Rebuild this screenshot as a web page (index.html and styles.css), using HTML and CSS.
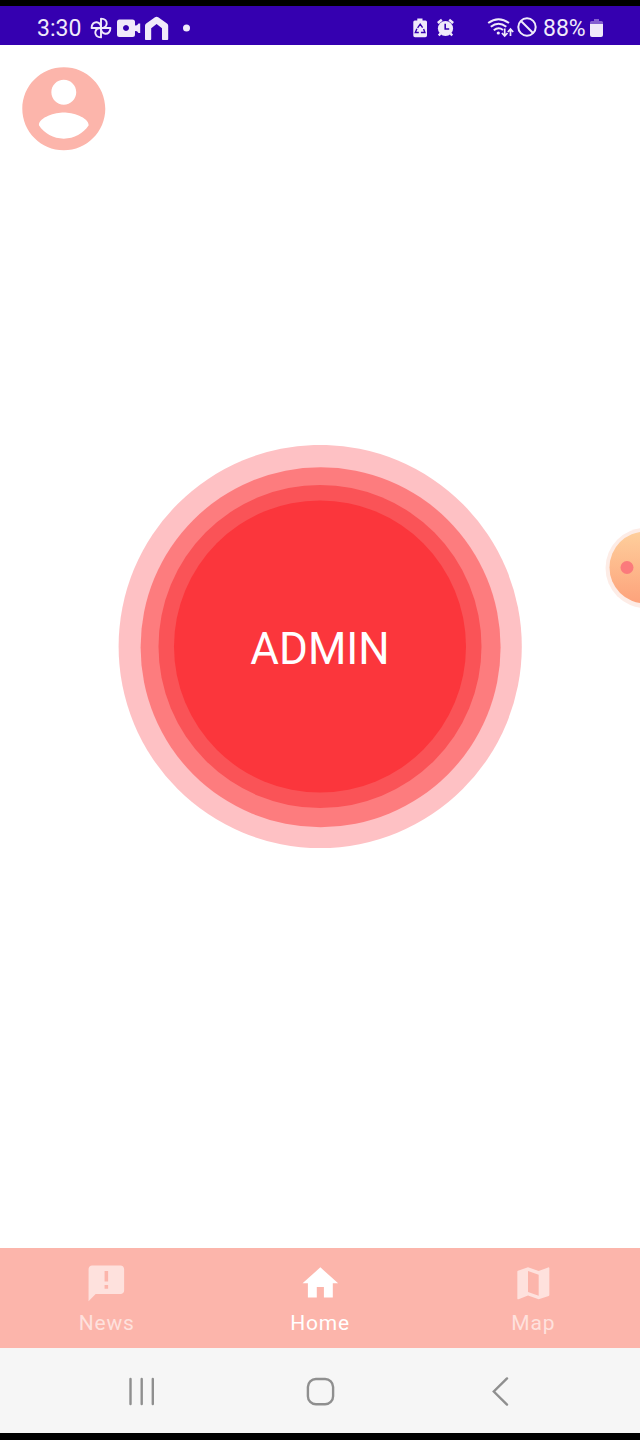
FILE: index.html
```html
<!DOCTYPE html>
<html lang="en">
<head>
<meta charset="utf-8">
<title>Admin</title>
<link rel="stylesheet" href="styles.css">
</head>
<body>
<div class="screen">
  <header class="status">
    <span class="status-text time">3:30</span>
    <svg class="status-left" viewBox="88 6 110 39" width="110" height="39">
      <g fill="none" stroke="#f0eafa" stroke-width="1.900" stroke-linejoin="round">
        <path d="M101 28V18.600C105 18.600 107 21 106.700 23.800C106.300 26.600 104 28 101 28"/>
        <path d="M101 28V18.600C105 18.600 107 21 106.700 23.800C106.300 26.600 104 28 101 28" transform="rotate(90 101 28)"/>
        <path d="M101 28V18.600C105 18.600 107 21 106.700 23.800C106.300 26.600 104 28 101 28" transform="rotate(180 101 28)"/>
        <path d="M101 28V18.600C105 18.600 107 21 106.700 23.800C106.300 26.600 104 28 101 28" transform="rotate(270 101 28)"/>
      </g>
      <g fill="#f0eafa">
        <path fill-rule="evenodd" d="M119.500 19.500h13q2.500 0 2.500 2.500v3.500l2-.2 1.500-1.800h1.700v9.500h-1.700l-1.500-1.800-2-.2v3.500q0 2.500-2.500 2.500h-13q-2.500 0-2.500-2.500V22q0-2.500 2.500-2.500zM126 25a3 3 0 1 0 .01 0z"/>
        <path d="M145 39.200V25.800q0-1.500 1.200-2.400l8.800-6.200q1.600-1.100 3.200 0l8.800 6.200q1.200.9 1.200 2.400v13.400q0 .8-.8.800h-4.600q-.8 0-.8-.8V28.300l-5.400-4.300-5.400 4.300v10.900q0 .8-.8.800h-4.600q-.8 0-.8-.8z"/>
        <circle cx="186.500" cy="28" r="3.500"/>
      </g>
    </svg>
    <svg class="status-right" viewBox="408 6 132 39" width="132" height="39">
      <path fill="#f0eafa" d="M417.300 18.500h5.200v2h3q1.500 0 1.500 1.500v13.500q0 1.700-1.700 1.700h-10.300q-1.700 0-1.700-1.700V22q0-1.500 1.500-1.500h2.500z"/>
      <path d="M417.600 27.800l2.600-3.600 2.400 3.400M423.600 29l1.300 3.500h-4M418.800 32.500h-3.500l1.600-3.700" fill="none" stroke="#3500b0" stroke-width="1.400"/>
      <circle cx="445.500" cy="28.500" r="7.600" fill="#f0eafa"/>
      <path d="M437.800 23l4-3.300M453.200 23l-4-3.300M440.500 33.500l-1.700 2M450.500 33.500l1.700 2" fill="none" stroke="#f0eafa" stroke-width="2.400"/>
      <path d="M445.200 23.700v5.300h4" fill="none" stroke="#3500b0" stroke-width="1.600"/>
      <g fill="none" stroke="#f0eafa" stroke-width="2">
        <path d="M488.200 23q10.300-7.700 20.800 0M490.800 26.800q7.700-6 15.500 0M493.800 30.300q4.700-3.800 9.200-.3"/>
        <path d="M504.700 28.500v7M501.900 33l2.800 3 2.800-3M510.500 36v-6.500M507.800 32l2.700-3 2.700 3" stroke-width="1.700"/>
        <circle cx="527" cy="27" r="8.700"/>
        <path d="M521 21l12 12"/>
      </g>
      <circle cx="498.300" cy="33" r="1.600" fill="#f0eafa"/>
    </svg>
    <span class="status-text percent">88%</span>
    <svg class="battery" viewBox="590 6 14 39" width="14" height="39">
      <path d="M594 19h5v2h2.500q1.500 0 1.500 1.500V25h-13v-2.500q0-1.500 1.500-1.500h2.500z" fill="#8460d0"/>
      <path d="M590 24h13v11q0 2-2 2h-9q-2 0-2-2z" fill="#f0eafa"/>
    </svg>
  </header>

  <main class="content">
    <svg class="avatar" viewBox="0 0 24 24" fill="#fcb5ab">
      <path d="M12 2C6.480 2 2 6.480 2 12s4.480 10 10 10 10-4.480 10-10S17.520 2 12 2zm0 3c1.660 0 3 1.340 3 3s-1.340 3-3 3-3-1.340-3-3 1.340-3 3-3zm0 14.200c-2.500 0-4.710-1.280-6-3.220.03-1.990 4-3.080 6-3.080 1.990 0 5.970 1.090 6 3.080-1.290 1.940-3.500 3.220-6 3.220z"/>
    </svg>
    <div class="alert-button">
      <svg class="rings" viewBox="118 445 404 404" width="404" height="404">
        <circle cx="320.200" cy="646.500" r="201.600" fill="#fec1c4"/>
        <circle cx="320.600" cy="647.200" r="180" fill="#fd7c7e"/>
        <circle cx="320" cy="646.500" r="161.500" fill="#fa5357"/>
        <circle cx="320" cy="646.500" r="146" fill="#fb363c"/>
      </svg>
      <span class="alert-label">ADMIN</span>
    </div>
    <svg class="bubble" viewBox="600 520 40 96" width="40" height="96">
      <defs><linearGradient id="peach" x1="0" y1="0" x2="0" y2="1"><stop offset="0" stop-color="#fecf9c"/><stop offset="1" stop-color="#fda27b"/></linearGradient></defs>
      <circle cx="645.500" cy="568" r="40" fill="#fdece6"/>
      <circle cx="645.500" cy="567.500" r="36" fill="url(#peach)"/>
      <circle cx="627" cy="567.500" r="6.500" fill="#fb7a7c"/>
    </svg>
  </main>

  <nav class="tabs">
    <div class="tab">
      <svg class="tab-icon" viewBox="0 0 24 24"><path d="M20 2H4c-1.100 0-1.990.9-1.990 2L2 22l4-4h14c1.100 0 2-.9 2-2V4c0-1.100-.9-2-2-2zm-7 9h-2V5h2v6zm0 4h-2v-2h2v2z"/></svg>
      <span>News</span>
    </div>
    <div class="tab active">
      <svg class="tab-icon" viewBox="0 0 24 24"><path d="M10 20v-6h4v6h5v-8h3L12 3 2 12h3v8z"/></svg>
      <span>Home</span>
    </div>
    <div class="tab">
      <svg class="tab-icon" viewBox="0 0 24 24"><path d="M20.500 3l-.16.03L15 5.100 9 3 3.360 4.900c-.21.07-.36.25-.36.48V20.500c0 .28.22.5.5.5l.16-.03L9 18.900l6 2.100 5.640-1.900c.21-.07.36-.25.36-.48V3.500c0-.28-.22-.5-.5-.5zM15 19l-6-2.110V5l6 2.110V19z"/></svg>
      <span>Map</span>
    </div>
  </nav>

  <footer class="system-nav">
    <svg viewBox="128 1376 28 30" width="28" height="30"><path d="M130.500 1379v25M141.700 1379v25M152.800 1379v25"/></svg>
    <svg viewBox="305 1376 30 30" width="30" height="30"><rect x="307.900" y="1379" width="25.200" height="25.200" rx="8"/></svg>
    <svg viewBox="490 1376 20 30" width="20" height="30"><path d="M507 1378.400L493.800 1391.500l13.200 13.100"/></svg>
  </footer>
</div>
</body>
</html>
```

FILE: styles.css
```css
* {
  box-sizing: border-box;
}

body {
  margin: 0;
  background: #000;
  font-family: Roboto, "Liberation Sans", sans-serif;
}

svg {
  display: block;
  flex: none;
}

.screen {
  display: flex;
  flex-direction: column;
  width: 640px;
  height: 1440px;
  padding: 6px 0 7px;
  overflow: hidden;
}

.status {
  display: flex;
  flex: none;
  height: 39px;
  padding-left: 37px;
  background: #3500b0;
}

.status-text {
  flex: none;
  color: #f0eafa;
  font-size: 23px;
  line-height: 46px;
  white-space: nowrap;
}

.time {
  width: 51px;
}

.status-right {
  margin-left: 210px;
}

.percent {
  width: 47px;
  margin-left: 3px;
}

.content {
  position: relative;
  display: flex;
  flex: 1;
  flex-direction: column;
  align-items: center;
  background: #fff;
}

.avatar {
  align-self: flex-start;
  width: 99.600px;
  height: 99.600px;
  margin: 14.400px 0 0 14.400px;
}

.alert-button {
  display: grid;
  place-items: center;
  width: 404px;
  height: 404px;
  margin-top: 286px;
}

.rings,
.alert-label {
  grid-area: 1 / 1;
}

.alert-label {
  padding-top: 5px;
  color: #fff;
  font-size: 44px;
  line-height: 52px;
}

.bubble {
  position: absolute;
  top: 475px;
  right: 0;
}

.tabs {
  display: grid;
  flex: none;
  grid-template-columns: repeat(3, 1fr);
  height: 100px;
  background: #fcb5ab;
}

.tab {
  display: flex;
  flex-direction: column;
  align-items: center;
  padding-top: 14px;
  color: #fee1dd;
  font-size: 21px;
  line-height: 26px;
  letter-spacing: 0.8px;
}

.tab span {
  margin-top: 5px;
}

.tab-icon {
  width: 42.700px;
  height: 42.700px;
  fill: currentColor;
}

.active {
  color: #fff;
}

.system-nav {
  display: grid;
  flex: none;
  grid-template-columns: 177px 185px 20px;
  height: 85px;
  padding: 28px 0 0 128px;
  background: #f6f6f6;
  fill: none;
  stroke: #8f8f8f;
  stroke-width: 2.400px;
  stroke-linecap: round;
}
```
